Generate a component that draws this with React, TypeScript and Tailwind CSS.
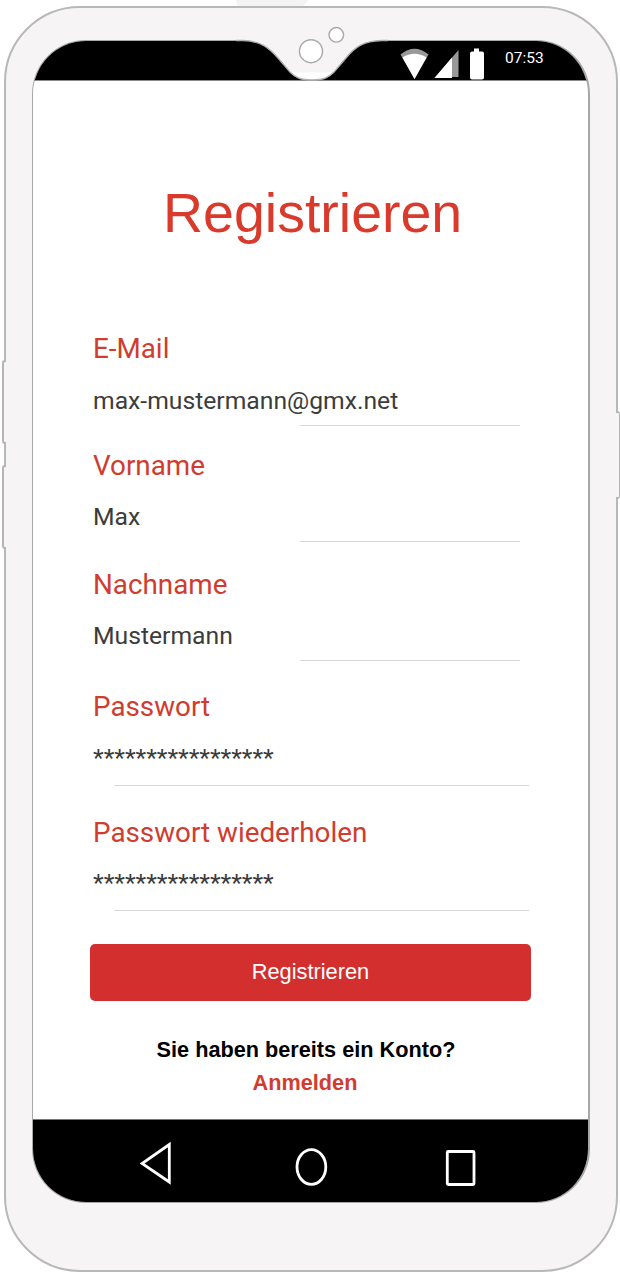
import React from "react";

type Field = { label: string; value: string; height: string; valueGap: string; line: string };

const fields: Field[] = [
  { label: "E-Mail", value: "max-mustermann@gmx.net", height: "h-[117px]", valueGap: "mt-[16px]", line: "ml-[207px] w-[220px] mt-[8px]" },
  { label: "Vorname", value: "Max", height: "h-[119px]", valueGap: "mt-[15px]", line: "ml-[207px] w-[220px] mt-[8px]" },
  { label: "Nachname", value: "Mustermann", height: "h-[122px]", valueGap: "mt-[15px]", line: "ml-[207px] w-[220px] mt-[8px]" },
  { label: "Passwort", value: "*****************", height: "h-[126px]", valueGap: "mt-[15px]", line: "ml-[21px] w-[415px] mt-[11px]" },
  { label: "Passwort wiederholen", value: "*****************", height: "h-[126px]", valueGap: "mt-[14px]", line: "ml-[21px] w-[415px] mt-[11px]" },
];

function Notch() {
  return (
    <svg className="absolute left-[230px] top-0 h-[88px] w-[170px]" viewBox="230 0 170 88" fill="none">
      <path d="M236 0H309L303 6H238Z" fill="#f3f3f3" />
      <path d="M236 38V40.5H243C261 41 269 48 278 58L290 72C296 78 301 80 312 80C323 80 328 78 334 72L346 58C355 47 363 41 382 40.5H388V38Z" fill="#f6f4f5" />
      <path d="M290 72.5H334C328 78 323 80 312 80C301 80 296 78 290 72.5Z" fill="#fff" />
      <path d="M236 40.5H243C261 41 269 48 278 58L290 72C296 78 301 80 312 80C323 80 328 78 334 72L346 58C355 47 363 41 382 40.5H388" stroke="#b0b0b0" strokeWidth="1.4" />
      <circle cx="311" cy="51.2" r="11.5" fill="#fff" stroke="#a9a9a9" strokeWidth="1.4" />
      <circle cx="336.3" cy="34.8" r="7.3" fill="#fff" stroke="#a9a9a9" strokeWidth="1.4" />
    </svg>
  );
}

function StatusBar() {
  return (
    <div className="flex h-[40px] shrink-0 items-start border-b border-[#8a8a8a] bg-black pl-[367px] text-white">
      <svg className="mt-[6px] h-[33px] w-[86px]" viewBox="400 47 86 33">
        <path d="M400.5 54.5Q414.5 43 428.5 54.5L414.5 79Z" fill="#999" />
        <path d="M402.5 57.5Q414.5 50 426.5 57.5L414.5 79Z" fill="#fff" />
        <path d="M434.5 78L458.5 50V77H452V78Z" fill="#999" />
        <path d="M434.5 78L452 57.5V78Z" fill="#fff" />
        <path d="M474 48.5H479V51.5H482Q484 51.5 484 53.5V77.5Q484 79.5 482 79.5H472Q470 79.5 470 77.5V53.5Q470 51.5 472 51.5H474Z" fill="#fff" />
      </svg>
      <span className="ml-[19px] mt-[7px] text-[15.5px] leading-[20px]">07:53</span>
    </div>
  );
}

function NavigationBar() {
  return (
    <div className="h-[83px] shrink-0 border-t border-[#777] bg-black">
      <svg className="ml-[107px] mt-[20px] h-[50px] w-[350px]" viewBox="140 1140 350 50" fill="none" stroke="#fff" strokeWidth="2.8">
        <path d="M169.3 1144.5V1182L142 1163.5Z" />
        <ellipse cx="311.4" cy="1167" rx="14.4" ry="17.3" />
        <rect x="447.3" y="1151.5" width="26.7" height="33" rx="1" />
      </svg>
    </div>
  );
}

export default function App() {
  return (
    <div className="relative h-[1279px] w-[620px] overflow-hidden bg-white font-['Roboto',sans-serif]">
      <div className="absolute left-[2px] top-[360px] h-[84px] w-[4px] rounded-l-[3px] border-y-2 border-l-2 border-[#b5b5b5] bg-[#f6f4f5]" />
      <div className="absolute left-[2px] top-[465px] h-[84px] w-[4px] rounded-l-[3px] border-y-2 border-l-2 border-[#b5b5b5] bg-[#f6f4f5]" />
      <div className="absolute left-[616px] top-[411px] h-[88px] w-[4px] rounded-r-[3px] border-y-2 border-r border-[#b5b5b5] bg-[#f6f4f5]" />
      <div className="flex h-full pb-[7px] pl-[4px] pr-[2px] pt-[6px]">
        <div className="flex-1 rounded-[76px] border-2 border-[#b8b8b8] bg-[#f6f4f5] px-[26px] pb-[67px] pt-[32px]">
          <main className="flex h-full flex-col overflow-hidden rounded-[54px] border border-r-2 border-[#a8a8a8] bg-white">
            <StatusBar />
            <h1 className="mt-[100px] pl-[130px] font-['Liberation_Sans',sans-serif] text-[55.5px] leading-[64px] text-[#d93a2b]">Registrieren</h1>
            <form className="mt-[84px] pl-[60px]">
              {fields.map((f) => (
                <div key={f.label} className={f.height}>
                  <label className="block whitespace-nowrap text-[27.8px] leading-[40px] text-[#d03c2e]">{f.label}</label>
                  <div className={`text-[24.7px] leading-[32px] text-[#3c3c3c] ${f.valueGap}`}>{f.value}</div>
                  <div className={`h-px bg-[#d8d8d8] ${f.line}`} />
                </div>
              ))}
            </form>
            <button className="ml-[57px] mt-[5px] h-[57px] w-[441px] shrink-0 rounded-[5px] bg-[#d32f2f] pb-px font-['Liberation_Sans',sans-serif] text-[21.8px] text-white">Registrieren</button>
            <div className="mt-[32px] w-[546px] text-center font-['Liberation_Sans',sans-serif] text-[21.7px] font-bold leading-[33px] text-black">
              <p>Sie haben bereits ein Konto?</p>
              <a className="pr-[2px] text-[#d03c2e]">Anmelden</a>
            </div>
            <div className="flex-1" />
            <NavigationBar />
          </main>
        </div>
      </div>
      <Notch />
    </div>
  );
}
